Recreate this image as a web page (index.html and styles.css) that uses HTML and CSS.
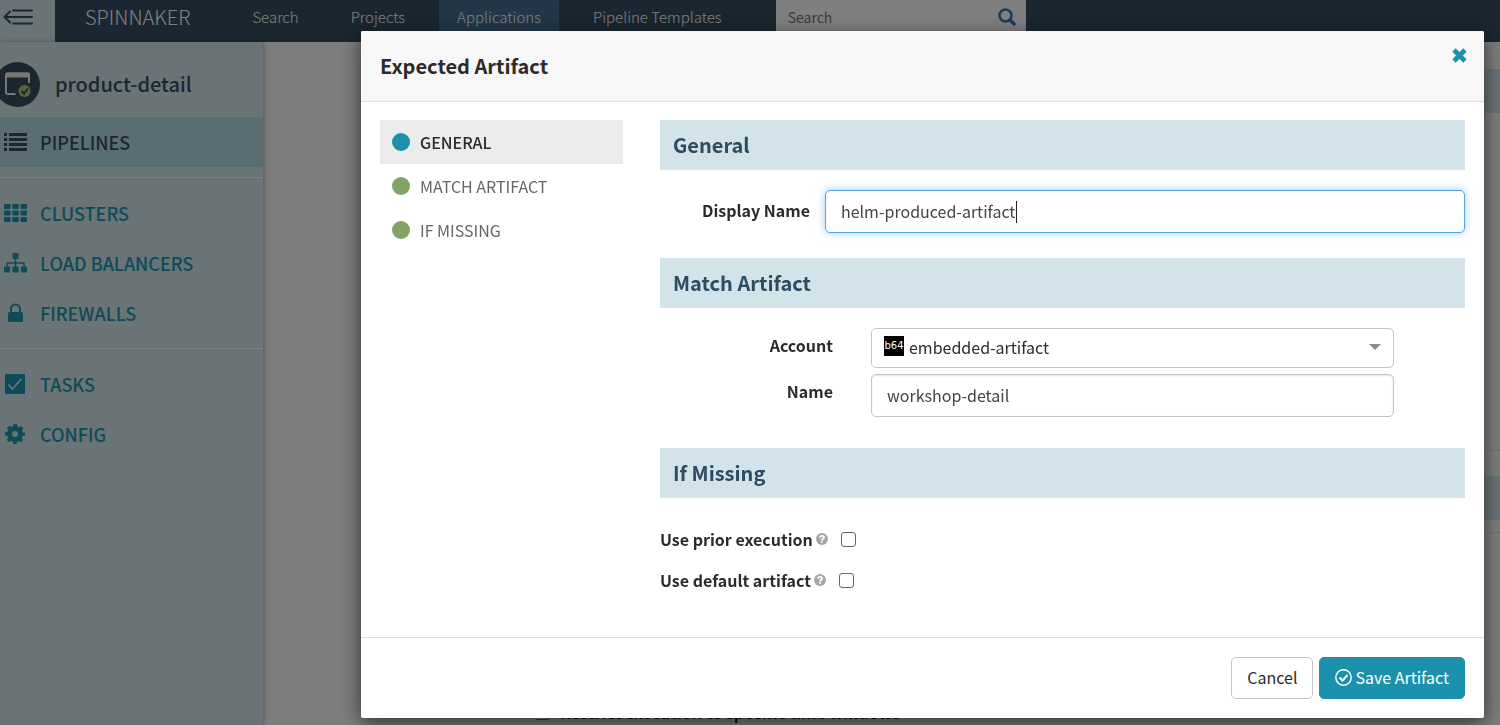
FILE: index.html
```
<!DOCTYPE html>
<html lang="en">
	<head>
		<meta charset="UTF-8" />
		<meta name="viewport" content="width=device-width, initial-scale=1.0" />
		<title>product-detail · Spinnaker</title>
		<link rel="stylesheet" href="styles.css">
	</head>
	<body>
		<header class="topbar">
			<button class="nav-toggle" type="button" aria-label="Collapse navigation">
				<svg width="32" height="16" viewBox="0 0 32 16" fill="none" stroke="currentColor" stroke-width="2" stroke-linecap="round">
					<path d="M10 1.5h19M2 8h27M10 14.5h19M7 2.500L1.500 8L7 13.500" />
				</svg>
			</button>
			<a class="brand" href="#">SPINNAKER</a>
			<nav class="topnav">
				<a href="#">Search</a>
				<a href="#">Projects</a>
				<a href="#" class="active">Applications</a>
				<a href="#">Pipeline Templates</a>
			</nav>
			<form class="global-search">
				<input type="search" placeholder="Search" aria-label="Search" />
				<svg width="18" height="18" viewBox="0 0 18 18" fill="none" stroke="currentColor">
					<circle cx="7.500" cy="7.500" r="6" stroke-width="2.500" />
					<path d="M12 12l4 4" stroke-width="3.500" stroke-linecap="round" />
				</svg>
			</form>
		</header>

		<div class="page">
			<aside class="sidebar">
				<div class="app-heading">
					<svg class="app-icon" width="45" height="45" viewBox="0 0 45 45">
						<circle cx="22.500" cy="22.500" r="22.500" fill="#344e60" />
						<path d="M34 21V13.500a2 2 0 0 0-2-2H13a2 2 0 0 0-2 2V30a2 2 0 0 0 2 2h7.500" fill="none" stroke="#f4ece8" stroke-width="2" />
						<path d="M10 15.500V12.500q0-2 2-2h21q2 0 2 2v3z" fill="#f4ece8" />
						<circle cx="29.500" cy="29" r="6" fill="#b4c878" />
						<path d="M26.500 29l2.500 2.500 4-5" fill="none" stroke="#344e60" stroke-width="2" />
					</svg>
					<h2>product-detail</h2>
				</div>
				<ul class="side-group">
					<li>
						<a href="#" class="active">
							<svg width="23" height="20" viewBox="0 0 23 20" fill="currentColor">
								<path d="M0 1h3v3H0zM5 1h18v3H5zM0 6h3v3H0zM5 6h18v3H5zM0 11h3v3H0zM5 11h18v3H5zM0 16h3v3H0zM5 16h18v3H5z" />
							</svg>
							PIPELINES
						</a>
					</li>
				</ul>
				<ul class="side-group">
					<li>
						<a href="#">
							<svg width="23" height="20" viewBox="0 0 23 20" fill="currentColor">
								<rect x="0" y="1" width="6.500" height="5" rx="1" />
								<rect x="8.250" y="1" width="6.500" height="5" rx="1" />
								<rect x="16.500" y="1" width="6.500" height="5" rx="1" />
								<rect x="0" y="7.500" width="6.500" height="5" rx="1" />
								<rect x="8.250" y="7.500" width="6.500" height="5" rx="1" />
								<rect x="16.500" y="7.500" width="6.500" height="5" rx="1" />
								<rect x="0" y="14" width="6.500" height="5" rx="1" />
								<rect x="8.250" y="14" width="6.500" height="5" rx="1" />
								<rect x="16.500" y="14" width="6.500" height="5" rx="1" />
							</svg>
							CLUSTERS
						</a>
					</li>
					<li>
						<a href="#">
							<svg width="23" height="20" viewBox="0 0 23 20" fill="currentColor">
								<rect x="8.500" y="0" width="6" height="6" rx="1" />
								<rect x="0" y="13.500" width="6" height="6" rx="1" />
								<rect x="8.500" y="13.500" width="6" height="6" rx="1" />
								<rect x="17" y="13.500" width="6" height="6" rx="1" />
								<path d="M11.500 5v9M3 14v-4h17v4" fill="none" stroke="currentColor" stroke-width="1.500" />
							</svg>
							LOAD BALANCERS
						</a>
					</li>
					<li>
						<a href="#">
							<svg width="23" height="20" viewBox="0 0 23 20" fill="currentColor">
								<rect x="4" y="9" width="15" height="10" rx="1.500" />
								<path d="M7 9.500V6a4.500 4.500 0 0 1 9 0v3.500" fill="none" stroke="currentColor" stroke-width="2" />
							</svg>
							FIREWALLS
						</a>
					</li>
				</ul>
				<ul class="side-group">
					<li>
						<a href="#">
							<svg width="23" height="20" viewBox="0 0 23 20">
								<rect x="1" y="0" width="20" height="20" rx="1" fill="currentColor" />
								<path d="M4.500 10.500l4 4.500L17.500 5" fill="none" stroke="#d4e6ec" stroke-width="1.800" />
							</svg>
							TASKS
						</a>
					</li>
					<li>
						<a href="#">
							<svg width="23" height="20" viewBox="0 0 23 20" fill="none" stroke="currentColor">
								<circle cx="11" cy="10" r="5.500" stroke-width="5" />
								<circle cx="11" cy="10" r="8.700" stroke-width="2.600" stroke-dasharray="3.600 3.233" stroke-dashoffset="1.800" />
							</svg>
							CONFIG
						</a>
					</li>
				</ul>
			</aside>
			<main class="content">
				<div class="stage"></div>
				<div class="stage triggers"></div>
				<label class="restrict">
					<input type="checkbox" />
					Restrict execution to specific time windows
				</label>
			</main>
		</div>

		<div class="backdrop">
			<form class="modal" role="dialog" aria-labelledby="modal-title">
				<div class="modal-header">
					<h1 id="modal-title">Expected Artifact</h1>
					<button class="close" type="button" aria-label="Close">
						<svg width="15" height="15" viewBox="0 0 15 15" stroke="currentColor" stroke-width="4.600">
							<path d="M2 2l11 11M13 2L2 13" />
						</svg>
					</button>
				</div>

				<div class="modal-body">
					<nav class="steps">
						<a href="#general" class="current">GENERAL</a>
						<a href="#match">MATCH ARTIFACT</a>
						<a href="#missing">IF MISSING</a>
					</nav>

					<div class="sections">
						<section class="general" id="general">
							<h3>General</h3>
							<div class="display-row">
								<label for="display-name">Display Name</label>
								<div class="caret-box">
									<input class="field focused" id="display-name" type="text" value="helm-produced-artifact" />
								</div>
							</div>
						</section>

						<section class="match" id="match">
							<h3>Match Artifact</h3>
							<div class="match-grid">
								<label for="account">Account</label>
								<div class="select-box">
									<span class="b64">b64</span>
									<select id="account">
										<option>embedded-artifact</option>
									</select>
								</div>
								<label for="name">Name</label>
								<input class="field" id="name" type="text" value="workshop-detail" />
							</div>
						</section>

						<section class="missing" id="missing">
							<h3>If Missing</h3>
							<div class="check-row">
								<label for="use-prior">Use prior execution</label>
								<svg width="12" height="12" viewBox="0 0 12 12" fill="none" stroke="#fff" stroke-width="1.800">
									<circle cx="6" cy="6" r="6" fill="#a6a6a6" stroke="none" />
									<path d="M4 4.800C4 2.300 8 2.300 8 4.500C8 5.800 6 5.600 6 7.400M6 8.200v1.600" />
								</svg>
								<input id="use-prior" type="checkbox" />
							</div>
							<div class="check-row">
								<label for="use-default">Use default artifact</label>
								<svg width="12" height="12" viewBox="0 0 12 12" fill="none" stroke="#fff" stroke-width="1.800">
									<circle cx="6" cy="6" r="6" fill="#a6a6a6" stroke="none" />
									<path d="M4 4.800C4 2.300 8 2.300 8 4.500C8 5.800 6 5.600 6 7.400M6 8.200v1.600" />
								</svg>
								<input id="use-default" type="checkbox" />
							</div>
						</section>
					</div>
				</div>

				<div class="modal-footer">
					<button class="btn" type="button">Cancel</button>
					<button class="btn btn-primary" type="button">
						<svg width="17" height="17" viewBox="0 0 17 17" fill="none" stroke="currentColor">
							<circle cx="8.500" cy="8.500" r="7.700" stroke-width="1.400" />
							<path d="M4.500 8.500l3 3 5-5.500" stroke-width="2" />
						</svg>
						Save Artifact
					</button>
				</div>
			</form>
		</div>
	</body>
</html>
```
FILE: styles.css
```
* {
	box-sizing: border-box;
}

body {
	margin: 0;
	height: 100vh;
	overflow: hidden;
	display: flex;
	flex-direction: column;
	font-family: "Noto Sans CJK SC", "Open Sans", sans-serif;
	font-size: 16px;
	line-height: 24px;
	color: #2b2b2b;
	background: #fafafa;
}

h1, h2, h3, ul {
	margin: 0;
	padding: 0;
}

a {
	text-decoration: none;
}

input, select, button {
	font: inherit;
	color: inherit;
}

svg {
	display: block;
	flex: none;
}

/* Top bar */
.topbar {
	display: flex;
	height: 42px;
	background: #344e60;
	line-height: 34px;
}

.nav-toggle {
	width: 55px;
	padding: 0 0 8px 3px;
	border: 0;
	background: #d4e6ec;
	color: #344e60;
}

.brand {
	margin: 0 44px 0 30px;
	font-size: 20px;
	font-weight: 300;
	color: #fff;
}

.topnav {
	display: flex;
	gap: 16px;
}

.topnav a {
	padding: 0 18px;
	font-size: 15px;
	font-weight: 300;
	color: #fff;
}

.topnav .active {
	background: #466e90;
}

.global-search {
	display: flex;
	width: 250px;
	height: 38px;
	margin-left: 36px;
	padding: 0 10px 4px 12px;
	align-items: center;
	background: #fff;
	color: #337ab7;
}

.global-search input {
	flex: 1;
	min-width: 0;
	padding: 0;
	border: 0;
	background: none;
	font-size: 14px;
}

.global-search input::placeholder {
	color: #777;
}

/* Sidebar */
.page {
	flex: 1;
	display: flex;
	min-height: 0;
}

.sidebar {
	width: 263px;
	background: #d4e6ec;
	box-shadow: 1px 0 4px rgba(0, 0, 0, 0.3);
}

.app-heading {
	display: flex;
	align-items: center;
	gap: 15px;
	height: 75px;
	padding-top: 9px;
	color: #344e60;
}

.app-icon {
	margin-left: -5px;
}

.app-heading h2 {
	font-size: 20px;
	font-weight: 500;
}

.side-group {
	list-style: none;
}

.side-group + .side-group {
	margin-top: 10px;
	padding-top: 10px;
	border-top: 1px solid #fff;
}

.side-group a {
	display: flex;
	align-items: center;
	gap: 13px;
	height: 50px;
	padding: 0 0 1px 4px;
	font-size: 18px;
	font-weight: 500;
	color: #1b96b0;
}

.side-group .active {
	background: #b4dae6;
	color: #344e60;
}

/* Pipeline page behind the dialog */
.content {
	flex: 1;
	display: flex;
	flex-direction: column;
	margin-left: 135px;
	padding-top: 27px;
	border-left: 1px solid #eee;
}

.stage {
	flex: none;
	margin-bottom: 337px;
}

.stage::before {
	content: "";
	display: block;
	height: 44px;
	background: #d4e6ec;
}

.triggers {
	margin-bottom: 167px;
	padding: 25px 0 12px;
	border: solid #e6e6e6;
	border-width: 1px 0;
}

.restrict {
	display: flex;
	align-items: center;
	gap: 10px;
	margin-left: 136px;
	font-weight: 700;
}

.restrict input {
	width: 15px;
	height: 15px;
	margin: 0;
}

/* Dialog */
.backdrop {
	position: fixed;
	inset: 0;
	padding: 31px 16px 0 361px;
	background: rgba(0, 0, 0, 0.5);
}

.modal {
	background: #fff;
	border-radius: 2px;
	box-shadow: 0 5px 20px rgba(0, 0, 0, 0.6);
}

.modal-header {
	display: flex;
	align-items: center;
	justify-content: space-between;
	height: 71px;
	padding: 0 17px 0 19px;
	border-bottom: 1px solid #ddd;
	border-radius: 2px 2px 0 0;
	background: #f7f7f7;
}

.modal-header h1 {
	font-size: 20px;
	font-weight: 700;
}

.close {
	align-self: flex-start;
	margin-top: 17px;
	padding: 0;
	border: 0;
	background: none;
	color: #1b91ab;
}

.modal-body {
	display: flex;
	gap: 37px;
	padding: 18px 19px 36px;
}

.steps {
	width: 243px;
}

.steps a {
	display: flex;
	align-items: center;
	gap: 10px;
	height: 44px;
	padding: 0 0 1px 12px;
	color: #666;
}

.steps a::before {
	content: "";
	width: 18px;
	height: 18px;
	border-radius: 50%;
	background: #7fa463;
}

.steps .current {
	background: #ebebeb;
	font-weight: 500;
	color: #2b2b2b;
}

.steps .current::before {
	background: #1b91ab;
}

.sections {
	flex: 1;
}

.sections h3 {
	padding-left: 13px;
	line-height: 50px;
	font-size: 20px;
	font-weight: 700;
	color: #2f4b61;
	background: #d2e3e9;
}

.sections label {
	font-weight: 700;
}

.field {
	width: 100%;
	height: 43px;
	padding: 0 15px 2px;
	border: 1px solid #c4c4c4;
	border-radius: 5px;
	outline: 0;
	background: #fff;
	box-shadow: inset 0 1px 2px rgba(0, 0, 0, 0.12);
	color: #444;
}

.focused {
	border-color: #56a2e0;
	box-shadow: 0 0 9px rgba(86, 162, 224, 0.55);
}

.display-row {
	display: grid;
	grid-template-columns: 150px 1fr;
	gap: 15px;
	margin: 20px 0 25px;
}

.display-row label,
.match-grid label {
	text-align: right;
}

.display-row label {
	line-height: 41px;
}

.caret-box {
	position: relative;
}

.caret-box::after {
	content: "";
	position: absolute;
	top: 11px;
	left: 191px;
	width: 1px;
	height: 22px;
	background: #222;
}

.match-grid {
	display: grid;
	grid-template-columns: 173px 1fr;
	gap: 6px 38px;
	margin: 20px 71px 31px 0;
}

.match-grid label {
	line-height: 34px;
}

.select-box {
	position: relative;
}

.select-box select {
	display: block;
	width: 100%;
	height: 40px;
	padding: 0 37px 2px;
	border: 1px solid #c4c4c4;
	border-radius: 5px;
	appearance: none;
	background: #fff;
}

.select-box::after {
	content: "";
	position: absolute;
	top: 16px;
	right: 13px;
	border: 6px solid transparent;
	border-top-color: #8c8c8c;
	border-bottom: 0;
}

.b64 {
	position: absolute;
	top: 8px;
	left: 13px;
	width: 20px;
	height: 20px;
	background: #000;
	color: #fff;
	font: 10px/20px "DejaVu Sans", sans-serif;
	text-align: center;
}

.missing h3 {
	margin-bottom: 21px;
}

.check-row {
	display: flex;
	align-items: center;
	gap: 3px;
	height: 41px;
	padding-bottom: 1px;
}

.check-row input {
	appearance: none;
	width: 15px;
	height: 15px;
	margin: 0 0 0 10px;
	border: 1px solid #666;
	border-radius: 3px;
	background: #fff;
}

.modal-footer {
	display: flex;
	justify-content: flex-end;
	gap: 6px;
	padding: 19px;
	border-top: 1px solid #ddd;
}

.btn {
	display: flex;
	align-items: center;
	gap: 3px;
	height: 42px;
	padding: 0 15px 2px;
	border: 1px solid #c4c4c4;
	border-radius: 5px;
	background: #fff;
}

.btn-primary {
	border-color: #1b91ab;
	background: #1b91ab;
	color: #fff;
}
```
